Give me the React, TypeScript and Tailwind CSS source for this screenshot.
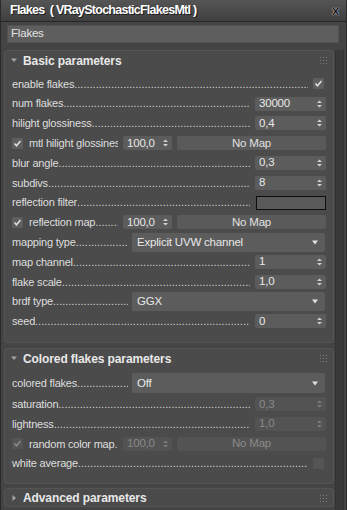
import React from "react";

const DOTS = ".".repeat(160);

function Dots() {
  return (
    <span className="flex-1 min-w-0 overflow-hidden whitespace-nowrap text-[#d4d4d4] tracking-normal">
      {DOTS}
    </span>
  );
}

function Label({ text }: { text: string }) {
  return <span className="whitespace-nowrap text-[#dedede]">{text}</span>;
}

function SpinArrows({ disabled }: { disabled?: boolean }) {
  const c = disabled ? "#7c7c7c" : "#d0d0d0";
  return (
    <svg width="5" height="8" viewBox="0 0 5 8" className="shrink-0">
      <polygon points="0,3 5,3 2.5,0.5" fill={c} />
      <polygon points="0,5 5,5 2.5,7.5" fill={c} />
    </svg>
  );
}

function Spinner({ value, disabled, small }: { value: string; disabled?: boolean; small?: boolean }) {
  return (
    <div
      className={`${small ? "w-[49px]" : "w-[71px]"} h-[14px] shrink-0 rounded-[2px] ${
        disabled ? "bg-[#535353] text-[#8a8a8a]" : "bg-[#5c5c5c] text-[#e8e8e8]"
      } flex items-center justify-between pl-[4px] pr-[4px] text-[11.5px]`}
    >
      <span className="leading-none">{value}</span>
      <SpinArrows disabled={disabled} />
    </div>
  );
}

function Check({ checked, disabled }: { checked?: boolean; disabled?: boolean }) {
  return (
    <div
      className={`w-[11px] h-[11px] shrink-0 rounded-[1px] ${
        disabled ? "bg-[#555555]" : "bg-[#5e5e5e]"
      } flex items-center justify-center`}
    >
      {checked && (
        <svg width="11" height="11" viewBox="0 0 11 11">
          <polyline
            points="2.5,5.5 4.5,7.8 8.5,3"
            fill="none"
            stroke={disabled ? "#8a8a8a" : "#dedede"}
            strokeWidth="1.6"
          />
        </svg>
      )}
    </div>
  );
}

function MapButton({ disabled }: { disabled?: boolean }) {
  return (
    <div
      className={`flex-1 h-[14px] rounded-[2px] ${
        disabled ? "bg-[#535353] text-[#8a8a8a]" : "bg-[#5a5a5a] text-[#e0e0e0]"
      } flex items-center justify-center leading-none text-[11.5px]`}
    >
      No Map
    </div>
  );
}

function Dropdown({ value, tall }: { value: string; tall?: boolean }) {
  return (
    <div
      className={`w-[193px] ${tall ? "h-[20px]" : "h-[19px]"} shrink-0 rounded-[2px] bg-[#5c5c5c] text-[#e8e8e8] flex items-center justify-between pl-[5px] pr-[7px]`}
    >
      <span className="text-[11.5px] leading-none">{value}</span>
      <svg width="6" height="5" viewBox="0 0 6 5">
        <polygon points="0,0.5 6,0.5 3,4.5" fill="#e0e0e0" />
      </svg>
    </div>
  );
}

function SpinRow({ label, value, disabled }: { label: string; value: string; disabled?: boolean }) {
  return (
    <div className="h-[19.8px] flex items-center">
      <Label text={label} />
      <Dots />
      <div className="w-[5px] shrink-0" />
      <Spinner value={value} disabled={disabled} />
    </div>
  );
}

function CheckRow({ label, checked, disabled }: { label: string; checked?: boolean; disabled?: boolean }) {
  return (
    <div className="h-[19.8px] flex items-center">
      <Label text={label} />
      <Dots />
      <div className="w-[5px] shrink-0" />
      <Check checked={checked} disabled={disabled} />
      <div className="w-[2px] shrink-0" />
    </div>
  );
}

function DropRow({ label, value, tall }: { label: string; value: string; tall?: boolean }) {
  return (
    <div className={`${tall ? "h-[22px]" : "h-[19.8px]"} flex items-center`}>
      <div className="w-[116px] shrink-0 flex overflow-hidden">
        <Label text={label} />
        <Dots />
      </div>
      <div className="w-[4px] shrink-0" />
      <Dropdown value={value} tall={tall} />
    </div>
  );
}

function MapRow({ label, disabled }: { label: string; disabled?: boolean }) {
  return (
    <div className="h-[19.8px] flex items-center">
      <Check checked disabled={disabled} />
      <div className="w-[6px] shrink-0" />
      <div className="w-[89px] shrink-0 flex overflow-hidden">
        <Label text={label} />
        <Dots />
      </div>
      <div className="w-[5px] shrink-0" />
      <Spinner value="100,0" small disabled={disabled} />
      <div className="w-[5px] shrink-0" />
      <MapButton disabled={disabled} />
    </div>
  );
}

function Grip() {
  return (
    <svg width="7" height="7" viewBox="0 0 7 7" className="shrink-0">
      {[0, 3, 6].map((x) =>
        [0, 3, 6].map((y) => <rect key={`${x}-${y}`} x={x} y={y} width="1" height="1" fill="#7c7c7c" />)
      )}
    </svg>
  );
}

function Header({ title, open }: { title: string; open?: boolean }) {
  return (
    <div className="h-[19px] shrink-0 flex items-center pl-[6px] pr-[6px]">
      <div className="w-[12px] shrink-0 flex items-center">
        {open ? (
          <svg width="6" height="5" viewBox="0 0 6 5">
            <polygon points="0,0.5 6,0.5 3,4" fill="#a3a3a3" />
          </svg>
        ) : (
          <svg width="5" height="6" viewBox="0 0 5 6" className="ml-[1px]">
            <polygon points="0.5,0 4,3 0.5,6" fill="#a3a3a3" />
          </svg>
        )}
      </div>
      <span className="text-[12px] font-bold text-[#e8e8e8] tracking-[-0.1px] whitespace-nowrap">{title}</span>
      <div className="flex-1" />
      <Grip />
    </div>
  );
}

export default function App() {
  return (
    <div className="w-[347px] h-[510px] overflow-hidden bg-[#444444] flex flex-col border-x border-[#2a2a2a] font-['Liberation_Sans',Arial,sans-serif] text-[11px] tracking-[-0.2px]">
      {/* title bar */}
      <div className="h-[22px] shrink-0 bg-gradient-to-b from-[#555555] to-[#3f3f3f] border-b border-[#262626] flex items-center pl-[9px] pr-[7px]">
        <span className="text-[12.5px] font-bold text-white tracking-[-0.75px] whitespace-pre [text-shadow:1px_1px_0_#1e1e1e]">
          {"Flakes  ( VRayStochasticFlakesMtl )"}
        </span>
        <div className="flex-1" />
        <span className="text-[13px] font-bold text-[#1c1c1c] leading-none [text-shadow:0_0_1px_#e0e0e0,0_0_1px_#e0e0e0]">
          x
        </span>
      </div>

      {/* name field */}
      <div className="mt-[3px] ml-[6px] w-[332px] h-[18px] shrink-0 bg-[#5e5e5e] border border-[#525252] flex items-center pl-[3px] text-[#e4e4e4] text-[11.5px]">
        Flakes
      </div>

      {/* content */}
      <div className="mt-[7px] flex flex-1 min-h-0">
        <div className="ml-[3px] w-[330px] shrink-0 flex flex-col">
          {/* Basic parameters */}
          <div className="rounded-[3px] bg-[#4b4b4b] border border-[#545454] flex flex-col">
            <Header title="Basic parameters" open />
            <div className="pt-[4px] pb-[11px] pl-[7px] pr-[7px] flex flex-col">
              <CheckRow label="enable flakes" checked />
              <SpinRow label="num flakes" value="30000" />
              <SpinRow label="hilight glossiness" value="0,4" />
              <MapRow label="mtl hilight glossiness" />
              <SpinRow label="blur angle" value="0,3" />
              <SpinRow label="subdivs" value="8" />
              <div className="h-[19.8px] flex items-center">
                <Label text="reflection filter" />
                <Dots />
                <div className="w-[6px] shrink-0" />
                <div className="w-[70px] h-[14px] shrink-0 bg-[#5a5a5a] border border-[#0e0e0e]" />
              </div>
              <MapRow label="reflection map" />
              <DropRow label="mapping type" value="Explicit UVW channel" />
              <SpinRow label="map channel" value="1" />
              <SpinRow label="flake scale" value="1,0" />
              <DropRow label="brdf type" value="GGX" />
              <SpinRow label="seed" value="0" />
            </div>
          </div>

          {/* Colored flakes parameters */}
          <div className="mt-[5px] rounded-[3px] bg-[#4b4b4b] border border-[#545454] flex flex-col">
            <Header title="Colored flakes parameters" open />
            <div className="pt-[4px] pb-[9px] pl-[7px] pr-[7px] flex flex-col">
              <DropRow label="colored flakes" value="Off" tall />
              <SpinRow label="saturation" value="0,3" disabled />
              <SpinRow label="lightness" value="1,0" disabled />
              <MapRow label="random color map" disabled />
              <CheckRow label="white average" disabled />
            </div>
          </div>

          {/* Advanced parameters */}
          <div className="mt-[4px] h-[19px] overflow-hidden rounded-[3px] bg-[#4b4b4b] border border-[#545454] flex flex-col">
            <Header title="Advanced parameters" />
          </div>
        </div>

        {/* scrollbar */}
        <div className="ml-[1px] w-[9px] shrink-0 bg-[#3a3a3a] border-x border-[#333333]" />
      </div>
    </div>
  );
}
